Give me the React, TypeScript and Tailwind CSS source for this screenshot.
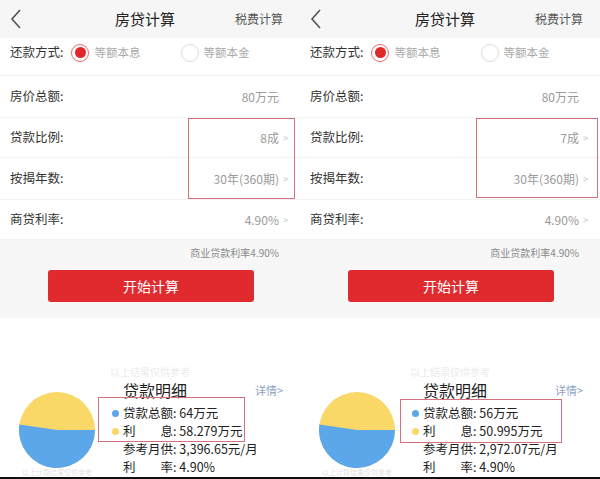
import React from 'react';

const font = { fontFamily: '"Noto Sans CJK SC", "Noto Sans", sans-serif' };

type PanelData = {
  ratio: string;
  loan: string;
  interest: string;
  monthly: string;
  share: number;
  rowBox: string;
  detailBox: string;
};

const panels: PanelData[] = [
  {
    ratio: '8成',
    loan: '64万元',
    interest: '58.279万元',
    monthly: '3,396.65元/月',
    share: 64 / (64 + 58.279),
    rowBox: 'left-[188px] top-[118px] w-[107px] h-[81px]',
    detailBox: 'left-[98px] top-[397px] w-[147px] h-[45px]',
  },
  {
    ratio: '7成',
    loan: '56万元',
    interest: '50.995万元',
    monthly: '2,972.07元/月',
    share: 56 / (56 + 50.995),
    rowBox: 'left-[176px] top-[118px] w-[122px] h-[80px]',
    detailBox: 'left-[100px] top-[399px] w-[162px] h-[44px]',
  },
];

const Chevron = ({ hidden }: { hidden?: boolean }) => (
  <span className={`w-[11px] pl-[4px] text-[10px] text-[#c8c8c8] ${hidden ? 'invisible' : ''}`}>&gt;</span>
);

const Row = ({ label, value, arrow = true, height }: { label: string; value: string; arrow?: boolean; height: string }) => (
  <div className={`shrink-0 flex items-center justify-between pl-[10px] pr-[10px] border-b border-[#f3f3f3] ${height}`}>
    <span className="text-[12.5px] text-[#333]">{label}</span>
    <span className="flex items-center text-[12px] text-[#9a9a9a]">
      {value}
      <Chevron hidden={!arrow} />
    </span>
  </div>
);

const Pie = ({ share }: { share: number }) => {
  const r = 38;
  const a = share * 2 * Math.PI;
  const x = r + r * Math.cos(a);
  const y = r + r * Math.sin(a);
  return (
    <svg width="76" height="76" viewBox="0 0 76 76">
      <circle cx="38" cy="38" r="38" fill="#f9d867" />
      <path d={`M38 38 L76 38 A38 38 0 ${share > 0.5 ? 1 : 0} 1 ${x} ${y} Z`} fill="#5ba7ea" />
    </svg>
  );
};

const DetailLine = ({ dot, children }: { dot?: string; children: React.ReactNode }) => (
  <div className="flex items-center h-[18px] text-[12.5px] text-[#222]">
    <span className="w-[11px] flex">
      {dot && <span className={`w-[7px] h-[7px] rounded-full ${dot}`} />}
    </span>
    <span className="whitespace-pre">{children}</span>
  </div>
);

const Panel = ({ d }: { d: PanelData }) => (
  <div className="relative w-[300px] h-[479px] flex flex-col bg-white overflow-hidden" style={font}>
    {/* top bar */}
    <div className="shrink-0 flex items-center h-[38px] bg-[#f6f6f6]">
      <div className="w-[100px] pl-[10px] flex">
        <svg width="12" height="20" viewBox="0 0 12 20">
          <polyline points="10,1 2,10 10,19" fill="none" stroke="#555" strokeWidth="1.6" />
        </svg>
      </div>
      <div className="w-[90px] text-center text-[15px] text-[#222]">房贷计算</div>
      <div className="flex-1 text-right pr-[17px] text-[12px] text-[#555]">税费计算</div>
    </div>

    {/* repayment type */}
    <div className="shrink-0 flex items-center h-[38px] pb-[8px] pl-[10px] border-b border-[#f3f3f3]">
      <span className="text-[12.5px] text-[#333]">还款方式:</span>
      <span className="ml-[8px] w-[18px] h-[18px] rounded-full border-[1.5px] border-[#e86a6e] flex items-center justify-center">
        <span className="w-[11px] h-[11px] rounded-full bg-[#e0282c]" />
      </span>
      <span className="ml-[5px] text-[11.5px] text-[#aaa]">等额本息</span>
      <span className="ml-[41px] w-[18px] h-[18px] rounded-full border border-[#dcdcdc]" />
      <span className="ml-[4px] text-[11.5px] text-[#aaa]">等额本金</span>
    </div>

    <Row label="房价总额:" value="80万元" arrow={false} height="h-[42px]" />
    <Row label="贷款比例:" value={d.ratio} height="h-[40px]" />
    <Row label="按揭年数:" value="30年(360期)" height="h-[42px]" />
    <Row label="商贷利率:" value="4.90%" height="h-[40px]" />

    {/* rate note + button */}
    <div className="shrink-0 h-[78px] bg-[#f7f7f7] flex flex-col">
      <div className="pt-[6px] pr-[21px] text-right text-[10px] leading-[14px] text-[#8a8a8a]">商业贷款利率4.90%</div>
      <div className="mt-[10px] ml-[48px] w-[206px] h-[32px] rounded-[3px] bg-[#e02a2e] flex items-center justify-center text-[14px] text-white">
        开始计算
      </div>
    </div>

    {/* loan details */}
    <div className="shrink-0 h-[159px] flex flex-col">
      <div className="pt-[48px] text-center text-[10px] leading-[12px] text-[#ececec]">以上结果仅供参考</div>
      <div className="mt-[3px] flex">
        <div className="w-[112px] pl-[19px] pt-[11px] flex flex-col">
          <Pie share={d.share} />
          <span className="w-[76px] text-center text-[7px] leading-[8px] text-[#e2e2e2] whitespace-nowrap overflow-hidden">以上计算结果仅供参考</span>
        </div>
        <div className="flex-1 flex flex-col">
          <div className="flex items-center justify-between h-[18px] pl-[11px] pr-[17px]">
            <span className="text-[16px] leading-[18px] text-[#222]">贷款明细</span>
            <span className="text-[11px] text-[#8da2c4]">详情&gt;</span>
          </div>
          <div className="mt-[5px]">
            <DetailLine dot="bg-[#5ba7ea]">贷款总额: {d.loan}</DetailLine>
            <DetailLine dot="bg-[#f9d867]">利　　息: {d.interest}</DetailLine>
            <DetailLine>参考月供: {d.monthly}</DetailLine>
            <DetailLine>利　　率: 4.90%</DetailLine>
          </div>
        </div>
      </div>
    </div>
    <div className="shrink-0 h-[2px] bg-[#111]" />

    {/* highlight frames */}
    <div className={`absolute border border-[#d3727c] ${d.rowBox}`} />
    <div className={`absolute border border-[#d3727c] ${d.detailBox}`} />
  </div>
);

export default function App() {
  return (
    <div className="flex w-[600px] h-[479px] overflow-hidden bg-white">
      {panels.map((p, i) => (
        <Panel key={i} d={p} />
      ))}
    </div>
  );
}
